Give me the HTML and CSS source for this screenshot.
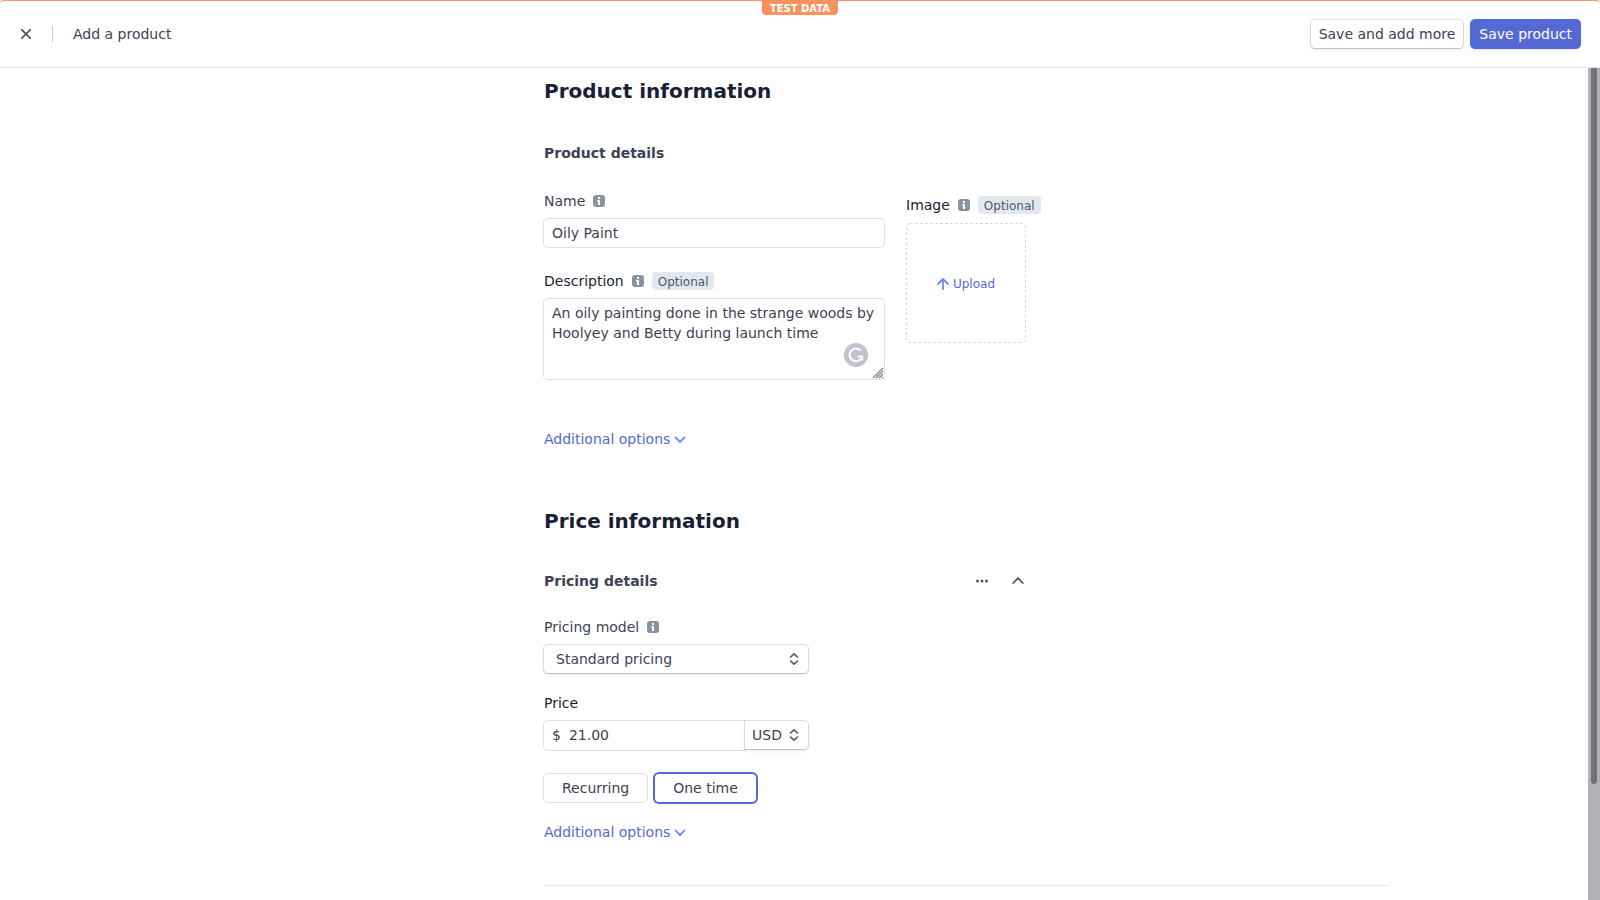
FILE: index.html
```html
<!DOCTYPE html>
<html lang="en">
<head>
    <meta charset="UTF-8">
    <meta name="viewport" content="width=device-width, initial-scale=1.0">
    <title>Add a product</title>
    <link rel="stylesheet" href="styles.css">
</head>
<body>
    <!-- Shared icons -->
    <svg class="sprite" aria-hidden="true">
        <symbol id="icon-info" viewBox="0 0 12 12">
            <rect width="12" height="12" rx="3" fill="#8792a2"/>
            <rect x="5" y="2" width="2" height="2" fill="#fff"/>
            <path d="M4 5h3v5H5V6.500H4z" fill="#fff"/>
        </symbol>
        <symbol id="icon-down" viewBox="0 0 12 12">
            <path d="M1.500 4.500L6 9l4.500-4.500" fill="none" stroke="currentColor" stroke-width="1.800" stroke-linecap="round" stroke-linejoin="round"/>
        </symbol>
        <symbol id="icon-updown" viewBox="0 0 12 12">
            <path d="M2.500 4L6 .8 9.500 4M2.500 8L6 11.200 9.500 8" fill="none" stroke="currentColor" stroke-width="1.600" stroke-linecap="round" stroke-linejoin="round"/>
        </symbol>
    </svg>

    <header class="topbar">
        <span class="test-badge">TEST DATA</span>
        <button class="icon-btn" type="button" aria-label="Close">
            <svg width="12" height="12" viewBox="0 0 12 12"><path d="M1.800 1.800l8.400 8.400M10.200 1.800l-8.400 8.400" stroke="currentColor" stroke-width="1.800" stroke-linecap="round"/></svg>
        </button>
        <div class="topbar-title">Add a product</div>
        <div class="topbar-actions">
            <button class="btn" type="button">Save and add more</button>
            <button class="btn btn-primary" type="submit" form="product-form">Save product</button>
        </div>
    </header>

    <div class="page">
        <main class="content">
            <form class="form" id="product-form">
                <!-- Product -->
                <section>
                    <h2>Product information</h2>
                    <h3>Product details</h3>
                    <div class="details">
                        <div class="fields">
                            <div class="label-row">
                                <label for="name">Name</label>
                                <svg class="info"><use href="#icon-info"/></svg>
                            </div>
                            <input class="input" type="text" id="name" value="Oily Paint">

                            <div class="label-row label-dark description-label">
                                <label for="description">Description</label>
                                <svg class="info"><use href="#icon-info"/></svg>
                                <span class="tag">Optional</span>
                            </div>
                            <div class="textarea-wrap">
                                <textarea class="input textarea" id="description" spellcheck="false">An oily painting done in the strange woods by Hoolyey and Betty during launch time</textarea>
                                <svg class="grammar" viewBox="0 0 24 24" aria-hidden="true">
                                    <circle cx="12" cy="12" r="12" fill="#c1c2d0"/>
                                    <path d="M16.800 7.600A6.400 6.400 0 1 0 18 14M13.400 13.600h4.800v4" fill="none" stroke="#fff" stroke-width="2"/>
                                </svg>
                                <svg class="grip" viewBox="0 0 12 12" aria-hidden="true">
                                    <path d="M1 11L11 1M4 11l7-7M7 11l4-4M10 11l1-1" stroke="#808080" stroke-width="1.200"/>
                                </svg>
                            </div>
                        </div>
                        <div class="image-field">
                            <div class="label-row label-dark">
                                <span>Image</span>
                                <svg class="info"><use href="#icon-info"/></svg>
                                <span class="tag">Optional</span>
                            </div>
                            <button class="upload" type="button">
                                <svg class="upload-border" viewBox="0 0 120 120" aria-hidden="true"><rect x=".5" y=".5" width="119" height="119" rx="4" fill="none" stroke="#c1c9d2" stroke-dasharray="2 3"/></svg>
                                <svg width="12" height="12" viewBox="0 0 12 12"><path d="M6 11.200V1.200M1 6l5-5 5 5" fill="none" stroke="currentColor" stroke-width="1.800" stroke-linecap="round" stroke-linejoin="round"/></svg>
                                <span>Upload</span>
                            </button>
                        </div>
                    </div>
                    <button class="more" type="button">Additional options <svg><use href="#icon-down"/></svg></button>
                </section>

                <!-- Price -->
                <section class="price-section">
                    <h2>Price information</h2>
                    <div class="price-head">
                        <h3>Pricing details</h3>
                        <button class="icon-btn" type="button" aria-label="More">
                            <svg width="12" height="12" viewBox="0 0 12 12" fill="currentColor"><circle cx="1.500" cy="6" r="1.500"/><circle cx="6" cy="6" r="1.500"/><circle cx="10.500" cy="6" r="1.500"/></svg>
                        </button>
                        <button class="icon-btn" type="button" aria-label="Collapse">
                            <svg width="12" height="12" viewBox="0 0 12 12"><path d="M1.200 8L6 3l4.800 5" fill="none" stroke="currentColor" stroke-width="1.800" stroke-linecap="round" stroke-linejoin="round"/></svg>
                        </button>
                    </div>

                    <div class="price-fields">
                        <div class="label-row">
                            <label for="model">Pricing model</label>
                            <svg class="info"><use href="#icon-info"/></svg>
                        </div>
                        <div class="select-wrap">
                            <select class="select" id="model">
                                <option>Standard pricing</option>
                            </select>
                            <svg class="select-arrow"><use href="#icon-updown"/></svg>
                        </div>

                        <div class="label-row label-dark price-label">
                            <label for="price">Price</label>
                        </div>
                        <div class="price-row">
                            <div class="amount">
                                <span>$</span>
                                <input type="text" id="price" value="21.00">
                            </div>
                            <div class="select-wrap currency">
                                <select class="select" aria-label="Currency">
                                    <option>USD</option>
                                </select>
                                <svg class="select-arrow"><use href="#icon-updown"/></svg>
                            </div>
                        </div>

                        <div class="billing">
                            <button class="choice" type="button" aria-pressed="false">Recurring</button>
                            <button class="choice selected" type="button" aria-pressed="true">One time</button>
                        </div>
                    </div>
                    <button class="more" type="button">Additional options <svg><use href="#icon-down"/></svg></button>
                </section>
                <hr>
            </form>
        </main>
        <div class="scrollbar"><div class="scrollbar-thumb"></div></div>
    </div>
</body>
</html>
```

FILE: styles.css
```css
* {
    box-sizing: border-box;
}

body {
    margin: 0;
    height: 100vh;
    display: flex;
    flex-direction: column;
    overflow: hidden;
    background: #fff;
    color: #3c4257;
    font-family: "DejaVu Sans", sans-serif;
    font-size: 14px;
    line-height: 20px;
}

button, input, textarea, select {
    font: inherit;
    color: inherit;
    margin: 0;
    padding: 0;
    border: none;
    background: none;
}

button {
    cursor: pointer;
}

svg {
    display: block;
    flex: none;
}

.sprite {
    position: absolute;
    width: 0;
    height: 0;
}

/* Top bar */
.topbar {
    position: relative;
    flex: none;
    display: flex;
    align-items: center;
    height: 68px;
    padding: 0 20px;
    border-top: 1px solid #f5925e;
    border-bottom: 1px solid #e3e8ee;
    border-radius: 4px 4px 0 0;
}

.test-badge {
    position: absolute;
    top: 0;
    left: 50%;
    transform: translateX(-50%);
    height: 14px;
    padding: 0 8px;
    border-radius: 0 0 4px 4px;
    background: #f5925e;
    color: #fff;
    font-size: 10px;
    font-weight: bold;
    line-height: 16px;
}

.icon-btn {
    color: #4f566b;
}

.topbar-title {
    margin-left: 20px;
    padding-left: 21px;
    background: linear-gradient(#c1c9d2, #c1c9d2) left center / 1px 16px no-repeat;
}

.topbar-actions {
    display: flex;
    gap: 8px;
    margin-left: auto;
}

.btn {
    height: 28px;
    padding: 0 8px;
    border-radius: 4px;
    background: #fff;
    box-shadow: 0 0 0 1px rgba(60, 66, 87, .16), 0 1px 1px rgba(0, 0, 0, .12), 0 2px 5px rgba(60, 66, 87, .08);
}

.btn-primary {
    background: #5469d4;
    color: #fff;
    box-shadow: 0 0 0 1px #5469d4, 0 1px 1px rgba(0, 0, 0, .12), 0 2px 5px rgba(60, 66, 87, .12);
}

/* Page */
.page {
    flex: 1;
    display: flex;
    min-height: 0;
}

.content {
    flex: 1;
    overflow: hidden;
}

.form {
    max-width: 1190px;
    margin: 0 auto;
    padding: 9px 0 0 345px;
}

.scrollbar {
    width: 12px;
    padding: 0 3px;
    background: #b0b1b4;
}

.scrollbar-thumb {
    height: 86%;
    border-radius: 0 0 3px 3px;
    background: #6f7178;
}

h2 {
    margin: 0 0 38px;
    color: #1a1f36;
    font-size: 20px;
    line-height: 28px;
}

h3 {
    margin: 0;
    font-size: 14px;
}

hr {
    height: 1px;
    margin: 43px 0 0;
    border: none;
    background: #e3e8ee;
}

.details {
    display: flex;
    gap: 22px;
    margin-top: 28px;
}

.fields {
    width: 340px;
}

.image-field {
    padding-top: 4px;
}

.label-row {
    display: flex;
    align-items: center;
    gap: 8px;
    height: 20px;
    margin-bottom: 8px;
}

.label-dark {
    color: #1a1f36;
}

.info {
    width: 12px;
    height: 12px;
}

.tag {
    height: 18px;
    padding: 0 6px;
    border-radius: 4px;
    background: #e3e8ee;
    color: #4f566b;
    font-size: 12px;
    line-height: 20px;
}

.input {
    display: block;
    width: 100%;
    height: 28px;
    padding: 4px 8px;
    border-radius: 4px;
    box-shadow: 0 0 0 1px #e0e0e2;
}

.description-label {
    margin-top: 24px;
}

.textarea-wrap {
    position: relative;
}

.textarea {
    height: 80px;
    resize: vertical;
    overflow: hidden;
}

.textarea::-webkit-resizer {
    background: transparent;
}

.grip {
    position: absolute;
    right: 0;
    bottom: 0;
    width: 12px;
    height: 12px;
    pointer-events: none;
}

.grammar {
    position: absolute;
    right: 16px;
    bottom: 12px;
    width: 24px;
    height: 24px;
}

.upload {
    position: relative;
    display: flex;
    align-items: center;
    justify-content: center;
    gap: 4px;
    width: 120px;
    height: 120px;
    padding-top: 2px;
    color: #5469d4;
    font-size: 12px;
}

.upload svg, .more svg {
    color: #6c8eef;
}

.upload .upload-border {
    position: absolute;
    inset: 0;
}

.more {
    display: flex;
    align-items: center;
    gap: 4px;
    color: #5469d4;
}

.more svg {
    width: 12px;
    height: 12px;
}

.details + .more {
    margin-top: 50px;
}

/* Price */
.price-section {
    margin-top: 58px;
}

.price-section h2 {
    margin-bottom: 36px;
}

.price-head {
    display: flex;
    align-items: center;
    gap: 24px;
    width: 480px;
    margin-bottom: 26px;
}

.price-head h3 {
    flex: 1;
}

.price-fields {
    width: 264px;
}

.select-wrap {
    position: relative;
}

.select {
    display: block;
    width: 100%;
    height: 28px;
    padding: 0 28px 0 12px;
    border-radius: 4px;
    background: #fff;
    appearance: none;
    box-shadow: 0 0 0 1px rgba(60, 66, 87, .16), 0 1px 1px rgba(0, 0, 0, .12), 0 2px 5px rgba(60, 66, 87, .08);
}

.select-arrow {
    position: absolute;
    top: 8px;
    right: 8px;
    width: 12px;
    height: 12px;
    color: #4f566b;
    pointer-events: none;
}

.price-label {
    margin-top: 20px;
}

.price-row {
    display: flex;
}

.amount {
    flex: 1;
    display: flex;
    gap: 8px;
    min-width: 0;
    height: 29px;
    padding: 4px 8px;
    border-radius: 4px 0 0 4px;
    box-shadow: 0 0 0 1px #e0e0e2;
}

.amount input {
    width: 100%;
    min-width: 0;
    height: 20px;
}

.currency {
    width: 63px;
}

.currency .select {
    padding: 0 20px 0 7px;
    border-radius: 0 4px 4px 0;
}

.billing {
    display: flex;
    gap: 8px;
    margin: 24px 0 20px;
}

.choice {
    height: 28px;
    padding: 0 18px;
    border-radius: 4px;
    box-shadow: 0 0 0 1px #e0e0e2;
}

.choice.selected {
    box-shadow: 0 0 0 2px #5469d4;
}
```
